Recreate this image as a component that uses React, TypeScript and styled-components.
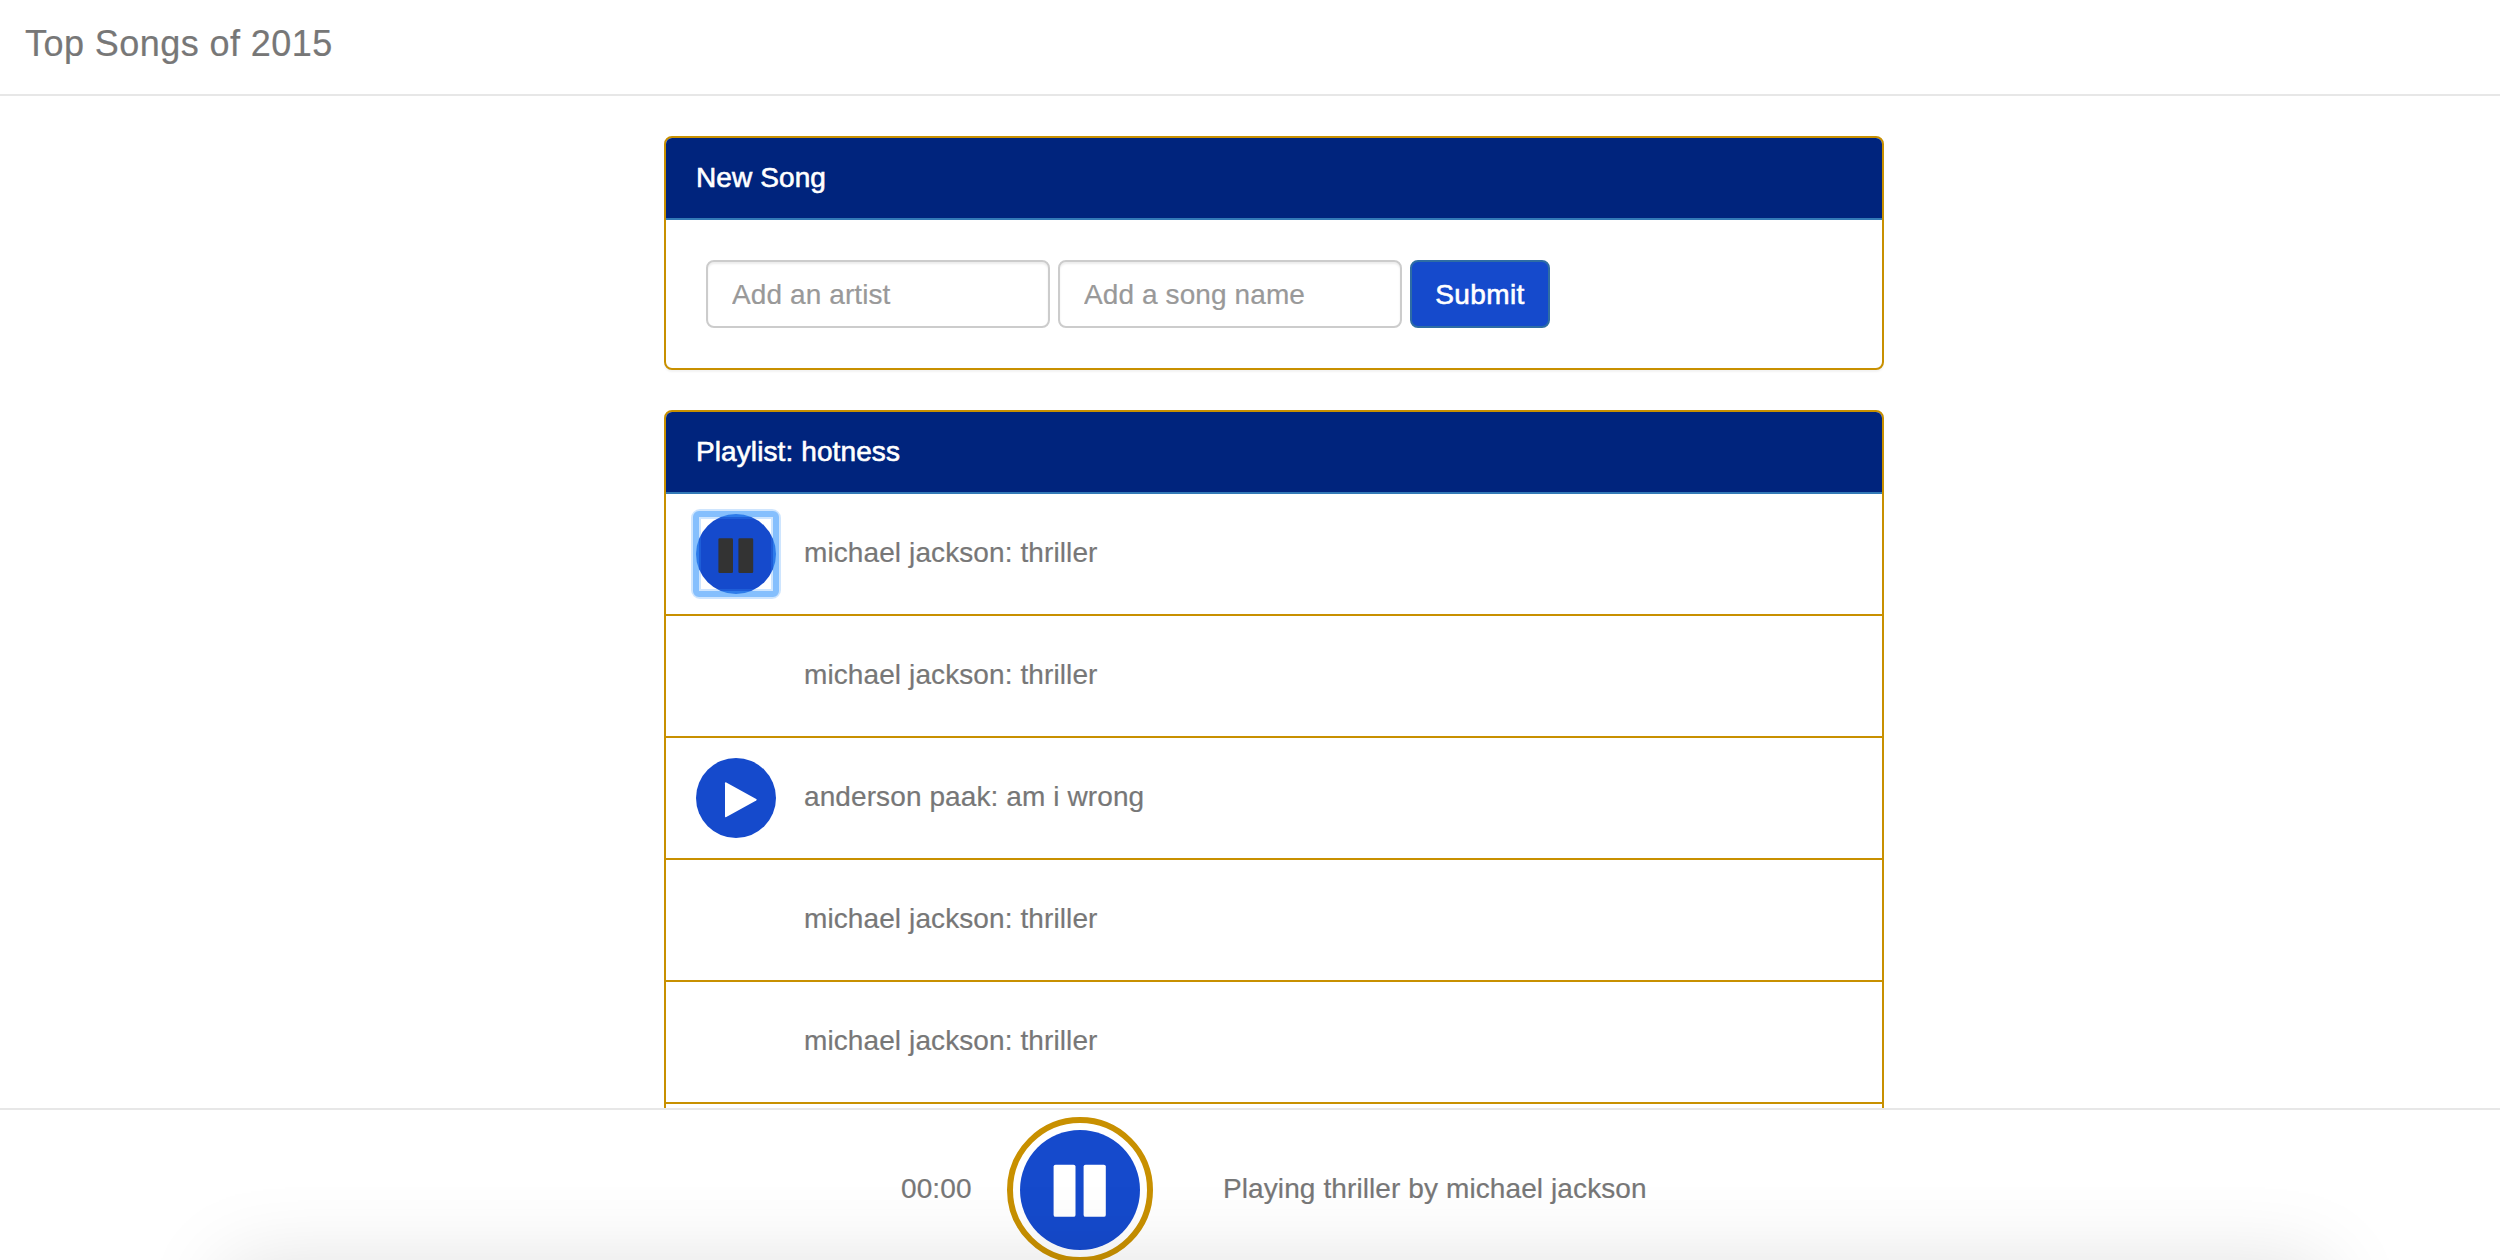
import React from "react";
import styled, { createGlobalStyle, css } from "styled-components";

const gold = "#c89000";
const blue = "#154acc";
const navy = "#00247d";

const GlobalStyle = createGlobalStyle`
  *, *::before, *::after { box-sizing: border-box; }
  html, body { margin: 0; padding: 0; overflow: hidden; }
  body {
    background: #fff;
    color: #777;
    font-family: "Liberation Sans", Arial, sans-serif;
    font-size: 28px;
    line-height: 40px;
    letter-spacing: 0.1px;
    -webkit-text-stroke: 0.2px currentColor;
  }
  button, input { font: inherit; letter-spacing: inherit; margin: 0; }
`;

const Page = styled.div`
  position: relative;
  display: flex;
  flex-direction: column;
  width: 100%;
  height: 100vh;
  overflow: hidden;
`;

const Navbar = styled.header`
  flex: none;
  height: 96px;
  padding: 24px 0 0 25px;
  border-bottom: 2px solid #e7e7e7;
`;

const Brand = styled.h1`
  margin: 0;
  font-size: 36px;
  line-height: 40px;
  font-weight: 400;
  letter-spacing: 0.44px;
`;

const Main = styled.main`
  flex: 1;
  min-height: 0;
  overflow: hidden;
  display: flex;
  flex-direction: column;
  gap: 40px;
  width: 1220px;
  margin-left: 664px;
  padding-top: 40px;
`;

const Panel = styled.section`
  flex: none;
  background: #fff;
  border: 2px solid ${gold};
  border-radius: 8px;
  box-shadow: 0 2px 2px rgba(0, 0, 0, 0.05);
`;

const PanelHeading = styled.h2`
  margin: 0;
  height: 82px;
  padding: 20px 30px;
  border-bottom: 2px solid #337ab7;
  border-radius: 6px 6px 0 0;
  background: ${navy};
  color: #fff;
  font-size: 28px;
  font-weight: 400;
  line-height: 40px;
  -webkit-text-stroke: 0.6px #fff;
`;

const SongForm = styled.form`
  display: flex;
  gap: 8px;
  padding: 40px;
`;

const TextField = styled.input`
  width: 344px;
  height: 68px;
  padding: 13px 24px 11px;
  border: 2px solid #ccc;
  border-radius: 8px;
  background: #fff;
  box-shadow: inset 0 2px 2px rgba(0, 0, 0, 0.075);
  &::placeholder { color: #999; opacity: 1; -webkit-text-stroke: 0.2px #999; }
`;

const SubmitButton = styled.button`
  width: 140px;
  height: 68px;
  padding: 1px 0 0;
  border: 2px solid #2e6da4;
  border-radius: 8px;
  background: ${blue};
  color: #fff;
  letter-spacing: 0.4px;
  -webkit-text-stroke: 0.6px #fff;
`;

const SongList = styled.ul`
  margin: 0;
  padding: 0;
  list-style: none;
`;

const SongRow = styled.li`
  display: flex;
  gap: 28px;
  height: 122px;
  padding: 20px 30px;
  border-bottom: 2px solid ${gold};
`;

const ControlSlot = styled.div`
  width: 80px;
  height: 80px;
`;

const RoundButton = styled.button<{ $size: number; $color: string; $focused?: boolean }>`
  position: relative;
  display: block;
  width: ${(p) => p.$size}px;
  height: ${(p) => p.$size}px;
  padding: 0;
  border: 0;
  border-radius: 50%;
  background: ${blue};
  color: ${(p) => p.$color};
  svg { display: block; width: 100%; height: 100%; }
  ${(p) =>
    p.$focused &&
    css`
      &::before, &::after {
        content: "";
        position: absolute;
        pointer-events: none;
      }
      &::before {
        inset: -5px;
        border: 10px solid rgba(59, 153, 252, 0.25);
        border-radius: 9px;
      }
      &::after {
        inset: -3px;
        border: 6px solid rgba(59, 153, 252, 0.5);
        border-radius: 6px;
      }
    `}
`;

const SongName = styled.span`
  padding-top: 19px;
`;

const Player = styled.footer`
  position: relative;
  flex: none;
  display: flex;
  align-items: flex-start;
  height: 152px;
  padding: 7px 0 0 901px;
  border-top: 2px solid #e7e7e7;
  overflow: hidden;
`;

const Elapsed = styled.span`
  width: 106px;
  padding-top: 52px;
`;

const PlayerRing = styled.div`
  flex: none;
  width: 146px;
  height: 146px;
  margin-right: 70px;
  padding: 7px;
  border: 6px solid ${gold};
  border-radius: 50%;
`;

const NowPlaying = styled.span`
  padding-top: 52px;
`;

const DockShadow = styled.div`
  position: absolute;
  left: 226px;
  right: 176px;
  top: 155px;
  height: 300px;
  box-shadow: 0 0 80px rgba(0, 0, 0, 0.13);
  pointer-events: none;
`;

const PauseIcon = ({ top = 24.2 }: { top?: number }) => (
  <svg viewBox="0 0 80 80" fill="currentColor" aria-hidden="true">
    <rect x="22.4" y={top} width="14.6" height="34.8" rx="1.3" />
    <rect x="42.4" y={top} width="14.8" height="34.8" rx="1.3" />
  </svg>
);

const PlayIcon = () => (
  <svg viewBox="0 0 80 80" fill="currentColor" aria-hidden="true">
    <path d="M29 25.2Q29 23.7 30.3 24.4L60.2 40.9Q61.5 41.7 60.2 42.5L30.3 59Q29 59.7 29 58.2Z" />
  </svg>
);

type Song = { artist: string; title: string; state?: "playing" | "paused" };

const songs: Song[] = [
  { artist: "michael jackson", title: "thriller", state: "playing" },
  { artist: "michael jackson", title: "thriller" },
  { artist: "anderson paak", title: "am i wrong", state: "paused" },
  { artist: "michael jackson", title: "thriller" },
  { artist: "michael jackson", title: "thriller" },
];

export default function App() {
  return (
    <Page>
      <GlobalStyle />
      <Navbar>
        <Brand>Top Songs of 2015</Brand>
      </Navbar>
      <Main>
        <Panel>
          <PanelHeading>New Song</PanelHeading>
          <SongForm>
            <TextField placeholder="Add an artist" />
            <TextField placeholder="Add a song name" />
            <SubmitButton type="button">Submit</SubmitButton>
          </SongForm>
        </Panel>
        <Panel>
          <PanelHeading>Playlist: hotness</PanelHeading>
          <SongList>
            {songs.map((song, i) => (
              <SongRow key={i}>
                <ControlSlot>
                  {song.state === "playing" && (
                    <RoundButton $size={80} $color="#333" $focused>
                      <PauseIcon />
                    </RoundButton>
                  )}
                  {song.state === "paused" && (
                    <RoundButton $size={80} $color="#fff">
                      <PlayIcon />
                    </RoundButton>
                  )}
                </ControlSlot>
                <SongName>
                  {song.artist}: {song.title}
                </SongName>
              </SongRow>
            ))}
            <SongRow />
          </SongList>
        </Panel>
      </Main>
      <Player>
        <Elapsed>00:00</Elapsed>
        <PlayerRing>
          <RoundButton $size={120} $color="#fff">
            <PauseIcon top={23.1} />
          </RoundButton>
        </PlayerRing>
        <NowPlaying>Playing thriller by michael jackson</NowPlaying>
        <DockShadow />
      </Player>
    </Page>
  );
}
